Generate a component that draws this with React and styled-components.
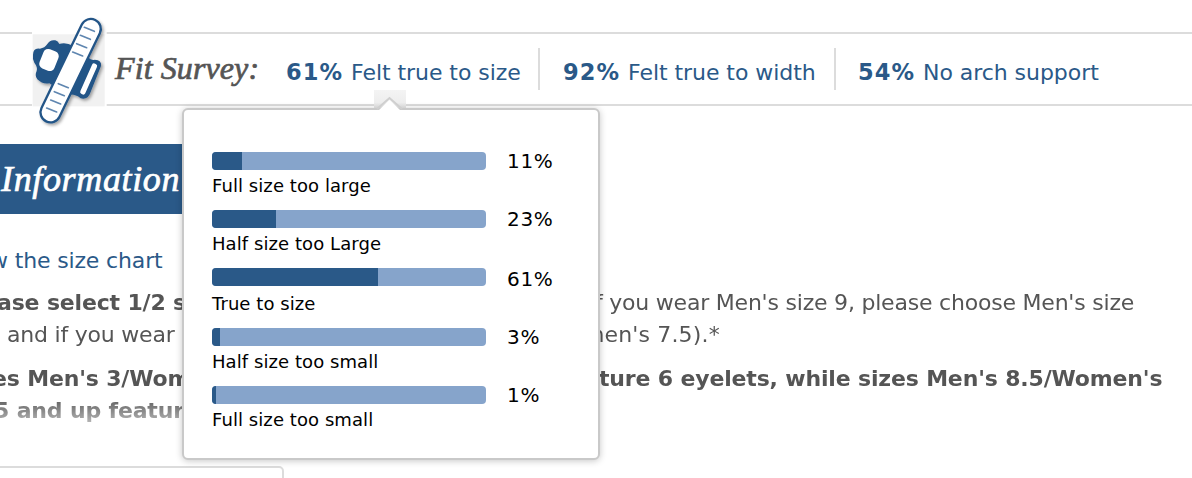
import React from 'react';
import styled, { createGlobalStyle } from 'styled-components';

const BLUE = '#2a5988';
const SANS = "Verdana, 'DejaVu Sans', sans-serif";
const SERIF = "Georgia, 'Liberation Serif', serif";

// fill is the drawn length in px, the track is 274px long
const RESULTS = [
  { label: 'Full size too large', percent: '11%', fill: 30 },
  { label: 'Half size too Large', percent: '23%', fill: 64 },
  { label: 'True to size', percent: '61%', fill: 166, offset: 2 },
  { label: 'Half size too small', percent: '3%', fill: 8 },
  { label: 'Full size too small', percent: '1%', fill: 4 },
];

const GlobalStyle = createGlobalStyle`
  * { box-sizing: border-box; }
  body { margin: 0; background: #fff; }
`;

const Page = styled.div`
  width: 1192px;
  height: 478px;
  padding-top: 32px;
  overflow: hidden;
  background: #fff;
  font-family: ${SANS};
  font-size: 22px;
`;

const SurveyBar = styled.header`
  position: relative;
  z-index: 1;
  display: flex;
  align-items: flex-start;
  height: 74px;
  padding-left: 20px;
  border-top: 2px solid #dcdcdc;
  border-bottom: 2px solid #dcdcdc;
`;

const Device = styled.svg`
  flex-shrink: 0;
  width: 100px;
  height: 120px;
  margin-top: -24px;
`;

const Title = styled.h2`
  width: 153px;
  flex-shrink: 0;
  margin: 0 0 0 -5px;
  font: italic 400 32px/68px ${SERIF};
  letter-spacing: 0.1px;
  white-space: nowrap;
  color: #555;
  -webkit-text-stroke: 0.7px #555;
`;

const Stat = styled.a`
  width: ${p => p.$width}px;
  flex-shrink: 0;
  height: 42px;
  margin-top: 14px;
  padding-left: ${p => p.$pad}px;
  border-right: ${p => (p.$last ? 'none' : '2px solid #dcdcdc')};
  line-height: 48px;
  letter-spacing: -0.05px;
  white-space: nowrap;
  color: ${BLUE};
`;

const StatValue = styled.b`
  display: inline-block;
  width: 65px;
  font-size: 22.5px;
  letter-spacing: 1.1px;
`;

const Popover = styled.section`
  position: absolute;
  left: 182px;
  top: 74px;
  width: 418px;
  height: 352px;
  padding: 42px 28px 0;
  background: #fff;
  border: 2px solid #c9c9c9;
  border-radius: 6px;
  box-shadow: 0 1px 7px rgba(0, 0, 0, 0.22);
`;

const Pointer = styled.svg`
  position: absolute;
  left: 190px;
  top: -20px;
  width: 32px;
  height: 20px;
`;

const Result = styled.div`
  display: grid;
  grid-template-columns: 274px 1fr;
  grid-template-rows: ${p => 18 + p.$offset}px 1fr;
  column-gap: 21px;
  align-items: start;
  height: ${p => 58 + p.$offset}px;
  color: #000;
`;

const Track = styled.div`
  height: 18px;
  overflow: hidden;
  background: #86a4cb;
  border-radius: 4px;
`;

const Fill = styled.div`
  height: 100%;
  background: ${BLUE};
`;

const Percent = styled.span`
  margin-top: ${p => p.$offset}px;
  font-size: 20px;
  line-height: 18px;
  letter-spacing: 0.7px;
`;

const Label = styled.span`
  margin-top: 6px;
  font-size: 18px;
  line-height: 20px;
  letter-spacing: 0.07px;
  white-space: nowrap;
`;

const Banner = styled.h2`
  width: 184px;
  height: 70px;
  margin: 38px 0 0;
  padding-left: 1px;
  background: ${BLUE};
  color: #fff;
  font: italic 400 36px/71px ${SERIF};
  letter-spacing: 0.65px;
  white-space: nowrap;
  -webkit-text-stroke: 0.7px #fff;
`;

const SizeLink = styled.a`
  display: block;
  margin: 31px 0 10px -10px;
  line-height: 32px;
  letter-spacing: -0.15px;
  color: ${BLUE};
`;

const Copy = styled.div`
  height: 156px;
  color: #555;
  mask-image: linear-gradient(#000 70%, transparent 100%);
`;

const Line = styled.div`
  display: grid;
  grid-template-columns: 182px 1fr;
  margin-top: ${p => p.$gap || 0}px;
  line-height: 32px;
  white-space: nowrap;
`;

const Part = styled.span`
  margin-left: ${p => p.$shift}px;
  font-weight: ${p => (p.$bold ? 700 : 400)};
  letter-spacing: ${p => p.$spacing ?? (p.$bold ? -0.16 : -0.21)}px;
`;

const Panel = styled.div`
  width: 288px;
  height: 40px;
  margin: 23px 0 0 -4px;
  border: 2px solid #dcdcdc;
  border-radius: 5px;
`;

function FootDevice() {
  return (
    <Device viewBox="0 0 300 360">
      <defs>
        <filter id="cast" x="-20%" y="-20%" width="140%" height="140%">
          <feDropShadow dx="5" dy="6" stdDeviation="4" floodColor="#000" floodOpacity="0.35" />
        </filter>
      </defs>
      <rect x="36" y="66" width="224" height="224" fill="#fff" />
      <rect x="38" y="73" width="216" height="216" fill="#f1f1f1" />
      <g filter="url(#cast)">
        <path
          d="M39 134 Q40 112 60 116 Q74 114 82 102 Q90 88 106 91 Q114 93 118 102 Q138 96 160 108 L204 142 Q214 152 224 149 Q246 150 243 168 L211 248 Q204 270 182 265 Q166 252 148 254 L88 220 Q68 224 52 208 Q43 197 50 183 Q54 172 43 158 Q37 147 39 134Z"
          fill="#235487"
        />
        <rect x="-24" y="-31" width="48" height="62" rx="15" transform="translate(87 150) rotate(22)" fill="#fff" />
        <rect x="-8" y="-50" width="16" height="100" rx="7" transform="translate(206 207) rotate(24)" fill="#fff" />
        <rect
          x="-30" y="-169" width="60" height="338" rx="30"
          transform="translate(152 182) rotate(25.8)"
          fill="#fff" stroke="#235487" strokeWidth="7"
        />
      </g>
      <g fill="none" stroke="#5f86b0" strokeWidth="5" strokeLinecap="round">
        <path d="M193 52 q8 3 15 6 t15 6 M181 76 q8 3 15 6 t15 6 M170 101 q8 3 15 6 t15 6 M158 126 q8 3 15 6 t15 6" />
        <path d="M115 221 q8 3 15 6 t15 6 M103 245 q8 3 15 6 t15 6 M92 270 q8 3 15 6 t15 6 M80 294 q8 3 15 6 t15 6" />
      </g>
    </Device>
  );
}

function ResultPopover() {
  return (
    <Popover>
      <Pointer viewBox="0 0 32 20">
        <defs>
          <linearGradient id="notch" x1="0" y1="0" x2="0" y2="1">
            <stop offset="0" stopColor="#f4f4f4" />
            <stop offset="0.7" stopColor="#ededed" />
            <stop offset="1" stopColor="#d2d2d2" />
          </linearGradient>
        </defs>
        <rect width="32" height="18" fill="url(#notch)" />
        <path d="M3 19 L15.500 8 L28 19" fill="none" stroke="#cfcfcf" strokeWidth="2" />
        <path d="M5 20 L15.500 10 L26 20Z" fill="#fff" />
      </Pointer>
      {RESULTS.map(({ label, percent, fill, offset = 0 }) => (
        <Result key={label} $offset={offset}>
          <Track>
            <Fill style={{ width: fill }} />
          </Track>
          <Percent $offset={offset}>{percent}</Percent>
          <Label>{label}</Label>
        </Result>
      ))}
    </Popover>
  );
}

export default function App() {
  return (
    <Page>
      <GlobalStyle />
      <SurveyBar>
        <FootDevice />
        <Title>Fit Survey:</Title>
        <Stat $width={272} $pad={18}>
          <StatValue>61%</StatValue>Felt true to size
        </Stat>
        <Stat $width={296} $pad={23}>
          <StatValue>92%</StatValue>Felt true to width
        </Stat>
        <Stat $width={300} $pad={22} $last>
          <StatValue>54%</StatValue>No arch support
        </Stat>
        <ResultPopover />
      </SurveyBar>

      <Banner>Information</Banner>
      <SizeLink>w the size chart</SizeLink>
      <Copy>
        <Line>
          <Part $bold $shift={-3}>ase select 1/2 s</Part>
          <Part $shift={407}>if you wear Men's size 9, please choose Men's size</Part>
        </Line>
        <Line>
          <Part $shift={7}>and if you wear</Part>
          <Part $shift={401} $spacing={0.15}>men's 7.5).*</Part>
        </Line>
        <Line $gap={12}>
          <Part $bold $shift={-8}>es Men's 3/Wom</Part>
          <Part $bold $shift={417}>ture 6 eyelets, while sizes Men's 8.5/Women's</Part>
        </Line>
        <Line>
          <Part $bold $shift={-6}>5 and up featur</Part>
        </Line>
      </Copy>
      <Panel />
    </Page>
  );
}
